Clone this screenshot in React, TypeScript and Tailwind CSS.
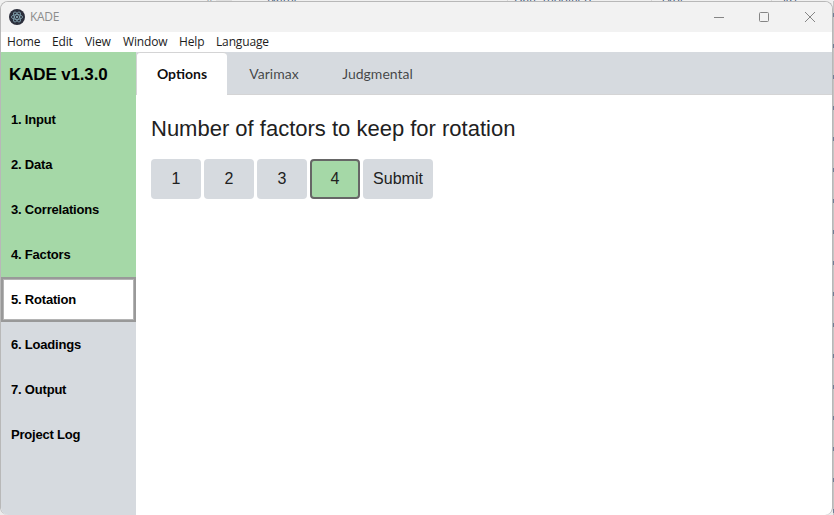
import React from 'react';

const menu = [
  { label: 'Home', box: 'w-[45px]' },
  { label: 'Edit', box: 'w-[33px]' },
  { label: 'View', box: 'w-[38px]' },
  { label: 'Window', box: 'w-[56px]' },
  { label: 'Help', box: 'w-[37px]' },
  { label: 'Language', box: 'w-[60px]' },
];

const steps = [
  { label: '1. Input', state: 'done' },
  { label: '2. Data', state: 'done' },
  { label: '3. Correlations', state: 'done' },
  { label: '4. Factors', state: 'done' },
  { label: '5. Rotation', state: 'active' },
  { label: '6. Loadings', state: 'todo' },
  { label: '7. Output', state: 'todo' },
  { label: 'Project Log', state: 'todo' },
];

const stepStyles: Record<string, string> = {
  done: 'bg-[#a5d8a7] pl-[10px]',
  active: 'bg-white border-2 border-[#999999] pl-[8px] shadow-[inset_0_0_0_1px_#b4b4b4]',
  todo: 'bg-[#d6dadf] pl-[10px]',
};

function ElectronIcon() {
  return (
    <svg className="h-4 w-4" viewBox="0 0 16 16" fill="none">
      <circle cx="8" cy="8" r="8" fill="#2b2e3b" />
      <g stroke="#88aab6" strokeWidth="0.8">
        <ellipse cx="8" cy="8" rx="5.6" ry="2.4" />
        <ellipse cx="8" cy="8" rx="5.6" ry="2.4" transform="rotate(60 8 8)" />
        <ellipse cx="8" cy="8" rx="5.6" ry="2.4" transform="rotate(120 8 8)" />
      </g>
      <circle cx="8" cy="8" r="0.9" fill="#a8cdd8" />
    </svg>
  );
}

/* Sliver of the file list that shows above the window */
function Backdrop() {
  return (
    <div className="flex h-[6px] overflow-hidden bg-[#f0f0f0] pl-[206px] font-['Open_Sans',sans-serif] text-[12px] leading-[12px] text-[#40587c]">
      <div className="mt-[-4px] w-[10px] shrink-0 text-[#8a949c]">^</div>
      <div className="h-[2px] w-[16px] shrink-0 bg-[#e0e0e0]" />
      <div className="ml-[35px] mt-[-7px] w-[240px] shrink-0">Name</div>
      <div className="h-[2px] w-px shrink-0 bg-[#d8d8d8]" />
      <div className="ml-[6px] mt-[-7px] w-[137px] shrink-0 tracking-[-0.15px]">Date modified</div>
      <div className="h-[2px] w-px shrink-0 bg-[#d8d8d8]" />
      <div className="ml-[8px] mt-[-7px] w-[111px] shrink-0">Type</div>
      <div className="h-[2px] w-px shrink-0 bg-[#d8d8d8]" />
      <div className="ml-[7px] mt-[-7px] shrink-0">Size</div>
    </div>
  );
}

/* Ends of the file list's rows along the window's right side */
function BackdropEdge() {
  return (
    <div className="flex h-[514px] w-px shrink-0 flex-col gap-[27px] overflow-hidden bg-[#c4c4c4] pt-[12px]">
      {Array.from({ length: 17 }, (_, i) => (
        <div key={i} className="h-1 shrink-0 bg-[#6f7f98]" />
      ))}
    </div>
  );
}

function TitleBar() {
  return (
    <header className="flex h-[30px] shrink-0 items-center bg-[#f2f2f2] pl-[8px]">
      <ElectronIcon />
      <span className="ml-[5px] font-['Open_Sans',sans-serif] text-[12px] tracking-[-0.3px] text-[#8c8c8c]">KADE</span>
      <svg className="ml-auto mr-[15px] h-[12px] w-[104px]" viewBox="0 0 104 12" fill="none" stroke="#858585">
        <path d="M1 6.5h10" />
        <rect x="46.5" y="1.5" width="9" height="9" rx="1" />
        <path d="M92 1l10 10M102 1L92 11" />
      </svg>
    </header>
  );
}

export default function App() {
  return (
    <div className="h-[515px] w-[834px] overflow-hidden bg-[#ececec]">
      <Backdrop />
      <div className="relative mt-[-5px] flex">
        <div className="flex h-[514px] w-[833px] flex-col overflow-hidden rounded-[8px] border border-b-0 border-[#b8b8b8] bg-white">
          <TitleBar />
          <nav className="flex h-[20px] shrink-0 items-center pl-[6px] font-['Open_Sans',sans-serif] text-[12px] tracking-[-0.15px] text-[#1c1c1c]">
            {menu.map((m) => (
              <span key={m.label} className={m.box}>{m.label}</span>
            ))}
          </nav>
          <div className="flex min-h-0 flex-1">
            <aside className="flex w-[135px] shrink-0 flex-col bg-[#d6dadf] font-['Liberation_Sans',Arial,sans-serif] font-bold text-black">
              <div className="flex h-[45px] items-center bg-[#a5d8a7] pl-[8px] text-[17px] tracking-[-0.15px]">KADE v1.3.0</div>
              {steps.map((s) => (
                <div key={s.label} className={`flex h-[45px] items-center text-[13px] tracking-[-0.2px] ${stepStyles[s.state]}`}>
                  {s.label}
                </div>
              ))}
            </aside>
            <main className="flex-1">
              <div className="flex h-[43px] border-b border-[#d4d4d5] bg-[#d6dadf] font-['Lato',sans-serif] text-[14px] text-black/70">
                <div className="mb-[-1px] flex w-[91px] items-center justify-center rounded-t-[4px] border-l border-t border-[#d4d4d5] bg-white pb-[2px] font-bold text-black/95">Options</div>
                <div className="flex w-[94px] items-center justify-center">Varimax</div>
                <div className="flex w-[113px] items-center justify-center">Judgmental</div>
              </div>
              <section className="px-[15px] pt-[18px] font-['Liberation_Sans',Arial,sans-serif] text-[#212121]">
                <h1 className="text-[22px] leading-[32px]">Number of factors to keep for rotation</h1>
                <div className="mt-[14px] flex gap-[3px] text-[16px]">
                  <button className="h-[40px] w-[50px] rounded-[4px] bg-[#d6dadf]">1</button>
                  <button className="h-[40px] w-[50px] rounded-[4px] bg-[#d6dadf]">2</button>
                  <button className="h-[40px] w-[50px] rounded-[4px] bg-[#d6dadf]">3</button>
                  <button className="h-[40px] w-[50px] rounded-[4px] border-2 border-[#666666] bg-[#a5d8a7]">4</button>
                  <button className="h-[40px] w-[70px] rounded-[4px] bg-[#d6dadf]">Submit</button>
                </div>
              </section>
            </main>
          </div>
        </div>
        <BackdropEdge />
      </div>
    </div>
  );
}
